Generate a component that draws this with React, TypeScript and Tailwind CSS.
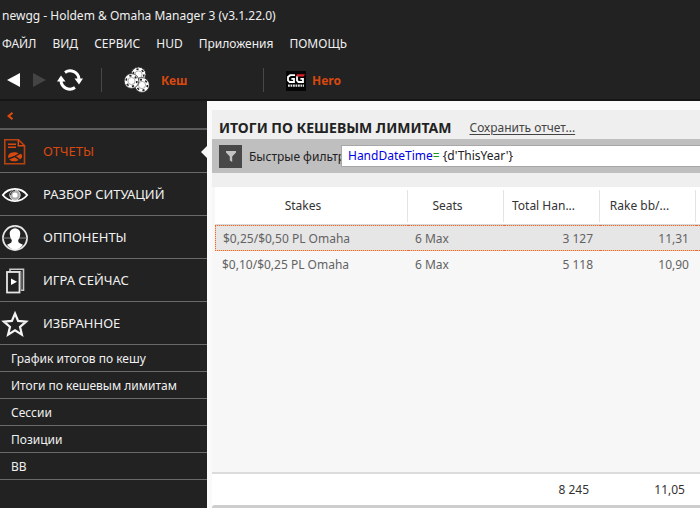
import { useState } from 'react'
import type { ReactNode } from 'react'

const menuItems = ['ФАЙЛ', 'ВИД', 'СЕРВИС', 'HUD', 'Приложения', 'ПОМОЩЬ']

const favorites = ['График итогов по кешу', 'Итоги по кешевым лимитам', 'Сессии', 'Позиции', 'BB']

const rows = [
  { stakes: '$0,25/$0,50 PL Omaha', seats: '6 Max', hands: '3 127', rake: '11,31' },
  { stakes: '$0,10/$0,25 PL Omaha', seats: '6 Max', hands: '5 118', rake: '10,90' },
]

function RefreshIcon() {
  return (
    <svg width="26" height="22" viewBox="0 0 26 22" aria-hidden="true">
      <path d="M8 3.4A9 9 0 0 1 22 10" fill="none" stroke="#fff" strokeWidth="3" />
      <path d="M18 18.6A9 9 0 0 1 4 12" fill="none" stroke="#fff" strokeWidth="3" />
      <path d="M17.5 9.5H26l-4 6z" fill="#fff" />
      <path d="M0 12.5h8.5L4 6.5z" fill="#fff" />
    </svg>
  )
}

function Chip({ x, y }: { x: number; y: number }) {
  return (
    <g transform={`translate(${x} ${y})`}>
      <circle r="7.4" fill="#fff" stroke="#222" strokeWidth="0.8" />
      <circle r="5.4" fill="none" stroke="#222" strokeWidth="1.6" strokeDasharray="2.2 3.45" />
      <circle r="3.6" fill="#fff" stroke="#777" strokeWidth="0.6" />
    </g>
  )
}

function ChipsIcon() {
  return (
    <svg width="26" height="26" viewBox="0 0 26 26" aria-hidden="true">
      <Chip x={14.5} y={7.5} />
      <Chip x={18} y={18} />
      <Chip x={7.5} y={14} />
    </svg>
  )
}

function RoomLogo() {
  return (
    <svg width="20" height="20" viewBox="0 0 20 20" aria-hidden="true">
      <rect width="20" height="20" fill="#050505" />
      <path d="M9 4.2H4.2L2 6v3.4L3.6 11H8V7.8H5.4" fill="none" stroke="#fff" strokeWidth="1.8" />
      <path d="M11.6 5L11 6v3.4l1.4 1.6H17V7.8h-2.6" fill="none" stroke="#fff" strokeWidth="1.8" />
      <path d="M11 3.2h8l-1.4 2.4h-7z" fill="#e21f26" />
      <path d="M2 14.6h16" stroke="#ddd" strokeWidth="2.2" strokeDasharray="1.8 0.7" />
    </svg>
  )
}

function ReportIcon() {
  return (
    <svg width="30" height="28" viewBox="0 0 30 28" fill="none" aria-hidden="true">
      <path d="M4.8 1.8h13.7l6 5.7v18.2H4.8z" stroke="#b84310" strokeWidth="1.6" />
      <path d="M18.3 2v5.7h6" stroke="#d9480f" strokeWidth="1.4" />
      <path d="M8 6.2h8M8 9.2h8" stroke="#d9480f" strokeWidth="1.6" />
      <path d="M14.6 17.8L8.4 20C7 17 10 14.2 14 14.2c2 0 3.6.5 4.6 1.2z" fill="#d9480f" />
      <path d="M16 18.2l4.8-2.4c2 1.4 1.6 4.2-.6 5.4z" fill="#d9480f" />
      <path d="M9.2 21.4l5.6-2.2 4 2.9c-3 2-7.6 1.4-9.6-.7z" fill="#d9480f" />
    </svg>
  )
}

function EyeIcon() {
  return (
    <svg width="30" height="28" viewBox="0 0 30 28" fill="none" aria-hidden="true">
      <path d="M2.8 14C9 6 21 6 27.2 14 21 22 9 22 2.8 14z" stroke="#fff" strokeWidth="1.8" />
      <circle cx="15" cy="14" r="5.2" fill="#aaa" stroke="#ddd" strokeWidth="1" />
      <circle cx="15" cy="14" r="2.6" fill="#fff" />
      <path d="M15 9.5a4.5 4.5 0 0 0-4.5 4.5" stroke="#333" strokeWidth="1.2" />
    </svg>
  )
}

function OpponentIcon() {
  return (
    <svg width="30" height="28" viewBox="0 0 30 28" fill="none" aria-hidden="true">
      <circle cx="15" cy="14" r="12" stroke="#e6e6e6" strokeWidth="1.8" />
      <path d="M3 14h24M15 2v5" stroke="#888" strokeWidth="1" />
      <path
        d="M15 4.5c3.6 0 5.6 2.5 5.2 6-.2 2.6-1 4.2-2 5.4 0 2 .4 2.7 1.6 3.3l3.2 1.5c-2 3-5 4.8-8 4.8s-6-1.8-8-4.8l3.2-1.5c1.2-.6 1.6-1.3 1.6-3.3-1-1.2-1.8-2.8-2-5.4-.4-3.5 1.6-6 5.2-6z"
        fill="#fff"
      />
    </svg>
  )
}

function PlayIcon() {
  return (
    <svg width="30" height="28" viewBox="0 0 30 28" fill="none" aria-hidden="true">
      <path d="M10 4V2.2h13.5v21H21" stroke="#c8c8c8" strokeWidth="1.6" />
      <path d="M21 23.5v-19H8" stroke="#999" strokeWidth="1" />
      <rect x="7" y="5" width="12.5" height="20.5" stroke="#e6e6e6" strokeWidth="1.8" />
      <path d="M11 11.5l6 3.3-6 3.3z" fill="#fff" />
    </svg>
  )
}

function StarIcon() {
  return (
    <svg width="30" height="28" viewBox="0 0 30 28" fill="none" aria-hidden="true">
      <path
        d="M15 3.5l3.1 7.4 8 .7-6.1 5.2 1.9 7.8-6.9-4.2-6.9 4.2 1.9-7.8-6.1-5.2 8-.7z"
        stroke="#f4f4f4"
        strokeWidth="2.2"
      />
    </svg>
  )
}

const sections: { label: string; icon: ReactNode }[] = [
  { label: 'ОТЧЕТЫ', icon: <ReportIcon /> },
  { label: 'РАЗБОР СИТУАЦИЙ', icon: <EyeIcon /> },
  { label: 'ОППОНЕНТЫ', icon: <OpponentIcon /> },
  { label: 'ИГРА СЕЙЧАС', icon: <PlayIcon /> },
  { label: 'ИЗБРАННОЕ', icon: <StarIcon /> },
]

function Header() {
  return (
    <header className="border-b-2 border-[#161616] bg-[#222222] text-xs text-[#f0f0f0]">
      <div className="h-8 pl-0.5 leading-8 whitespace-nowrap">newgg - Holdem &amp; Omaha Manager 3 (v3.1.22.0)</div>
      <nav className="flex h-6 items-center gap-4 pl-0.5">
        {menuItems.map((item) => (
          <button key={item} type="button" className="whitespace-nowrap">
            {item}
          </button>
        ))}
      </nav>
      <div className="flex h-[43px] items-center pt-1 font-bold text-[#d9480f]">
        <button type="button" aria-label="Назад" className="ml-[7px]">
          <svg width="13" height="14" viewBox="0 0 13 14" className="block">
            <path d="M13 0v14L0 7z" fill="#fff" />
          </svg>
        </button>
        <button type="button" aria-label="Вперед" className="ml-[13px]">
          <svg width="13" height="14" viewBox="0 0 13 14" className="block">
            <path d="M0 0v14l13-7z" fill="#444" />
          </svg>
        </button>
        <button type="button" aria-label="Обновить" className="ml-[11px]">
          <RefreshIcon />
        </button>
        <div className="ml-[18px] h-6 w-px bg-[#484848]" />
        <button type="button" className="ml-[22px] flex w-[139px] items-center gap-[11px]">
          <ChipsIcon />
          <span className="pt-0.5">Кеш</span>
        </button>
        <div className="h-6 w-px bg-[#484848]" />
        <button type="button" className="ml-[22px] flex items-center gap-1.5 pt-0.5">
          <RoomLogo />
          <span>Hero</span>
        </button>
      </div>
    </header>
  )
}

function Sidebar() {
  const [active, setActive] = useState('ОТЧЕТЫ')

  return (
    <aside className="w-[207px] shrink-0 bg-[#222222] text-[#f0f0f0]">
      <div className="flex h-[29px] items-center border-b-2 border-[#5a5a5a] pt-0.5 pl-[7px]">
        <button type="button" aria-label="Свернуть">
          <svg width="6" height="8" viewBox="0 0 6 8" className="block">
            <path d="M5.500 0.800L1.500 4l4 3.200" fill="none" stroke="#e04a0c" strokeWidth="2" />
          </svg>
        </button>
      </div>
      <nav>
        {sections.map(({ label, icon }) => (
          <button
            key={label}
            type="button"
            onClick={() => setActive(label)}
            className={`relative flex h-[43px] w-full items-center gap-[13px] border-b border-[#6a6a6a] pt-0.5 text-left text-[13px] ${
              active === label ? 'text-[#d9480f]' : ''
            }`}
          >
            {icon}
            {label}
            {active === label && (
              <svg width="6" height="12" viewBox="0 0 6 12" className="absolute top-4 right-0">
                <path d="M6 0v12L0 6z" fill="#f7f7f7" />
              </svg>
            )}
          </button>
        ))}
        {favorites.map((name) => (
          <button
            key={name}
            type="button"
            className="flex h-[27px] w-full items-center border-b border-[#6a6a6a] pt-0.5 pl-[11px] text-left text-xs whitespace-nowrap"
          >
            {name}
          </button>
        ))}
      </nav>
    </aside>
  )
}

function FilterBar() {
  const [filter, setFilter] = useState("HandDateTime= {d'ThisYear'}")
  const [field, ...rest] = filter.split('=')

  return (
    <div className="flex h-[34px] items-center bg-[#bfbfbf] pl-[7px] text-xs text-[#222222]">
      <button type="button" aria-label="Фильтр" className="flex size-[23px] shrink-0 items-center justify-center bg-[#484848]">
        <svg width="10" height="11" viewBox="0 0 10 11">
          <path d="M0 0h10v1.5L6.2 5.5V11L3.8 9.5v-4L0 1.5z" fill="#c4c4c4" />
        </svg>
      </button>
      <label htmlFor="quick-filter" className="ml-[7px] w-[92px] shrink-0 pt-0.5 whitespace-nowrap">
        Быстрые фильтр
      </label>
      {/* The coloured expression lies under the transparent input text */}
      <div className="relative h-[22px] flex-1 border-y border-l border-[#a8a8a8] bg-white leading-5">
        <div aria-hidden="true" className="absolute inset-0 overflow-hidden pl-[6px] whitespace-pre">
          <span className="text-[#0000e6]">{field}</span>
          {rest.length > 0 && <span className="text-[#1a9a1a]">=</span>}
          {rest.join('=')}
        </div>
        <input
          id="quick-filter"
          type="text"
          value={filter}
          spellCheck={false}
          onChange={(e) => setFilter(e.target.value)}
          className="relative block h-5 w-full bg-transparent pl-[6px] text-transparent caret-black outline-none"
        />
      </div>
    </div>
  )
}

function Columns() {
  return (
    <colgroup>
      <col className="w-[193px]" />
      <col className="w-24" />
      <col className="w-24" />
      <col className="w-24" />
      <col />
    </colgroup>
  )
}

function ReportTable() {
  const [selected, setSelected] = useState(0)
  const headers = ['Stakes', 'Seats', 'Total Han...', 'Rake bb/...']

  return (
    <table className="w-full table-fixed border-separate border-spacing-0 text-xs text-[#636363]">
      <Columns />
      <thead>
        <tr className="h-[38px] bg-white text-[#333333]">
          {headers.map((h) => (
            <th key={h} className="border-b border-[#d5dade] p-0 font-normal">
              <div className="flex h-8 items-center justify-center border-r border-[#e4e4e4] pr-4 whitespace-nowrap">{h}</div>
            </th>
          ))}
          <th className="border-b border-[#d5dade] p-0" />
        </tr>
      </thead>
      <tbody>
        {rows.map((row, i) => (
          <tr
            key={row.stakes}
            onClick={() => setSelected(i)}
            className={
              selected === i
                ? 'h-[26px] bg-[#f9c4a8] *:border-y *:border-dotted *:border-[#f0692b] *:bg-[#e6e6e6] *:bg-clip-padding *:first:border-l'
                : 'h-[26px]'
            }
          >
            <td className="pt-0.5 pr-0 pb-0 pl-[7px]">{row.stakes}</td>
            <td className="pt-0.5 pr-0 pb-0 pl-[7px]">{row.seats}</td>
            <td className="pt-0.5 pr-[7px] pb-0 pl-0 text-right">{row.hands}</td>
            <td className="pt-0.5 pr-[7px] pb-0 pl-0 text-right">{row.rake}</td>
            <td className="p-0" />
          </tr>
        ))}
      </tbody>
    </table>
  )
}

export default function App() {
  return (
    <div className="flex min-h-screen flex-col overflow-hidden font-['Noto_Sans','Open_Sans',sans-serif]">
      <Header />
      <div className="flex flex-1">
        <Sidebar />
        <main className="flex min-w-0 flex-1 flex-col bg-[#fafafa] pt-[9px] pl-[5px]">
          <div className="bg-[#efefef] pb-3.5">
            <div className="flex h-[29px] items-center gap-[18px] pt-1.5 pl-[7px] whitespace-nowrap">
              <h1 className="text-sm font-bold text-[#222222]">ИТОГИ ПО КЕШЕВЫМ ЛИМИТАМ</h1>
              <a href="#save" className="text-xs text-[#444444] underline underline-offset-2">
                Сохранить отчет...
              </a>
            </div>
            <FilterBar />
          </div>
          <div className="flex-1 bg-[#f7f7f7] pl-[3px]">
            <ReportTable />
          </div>
          <div className="border-t-2 border-[#dcdcdc] bg-white pl-[3px]">
            <table className="w-full table-fixed border-collapse text-xs text-[#333333]">
              <Columns />
              <tbody>
                <tr className="h-[31px]">
                  <td className="p-0" />
                  <td className="p-0" />
                  <td className="py-0 pr-[11px] pl-0 text-right">8 245</td>
                  <td className="py-0 pr-[11px] pl-0 text-right">11,05</td>
                  <td className="p-0" />
                </tr>
              </tbody>
            </table>
          </div>
          <div className="h-[3px] rounded-tl bg-[#cdcdcd]" />
        </main>
      </div>
    </div>
  )
}
